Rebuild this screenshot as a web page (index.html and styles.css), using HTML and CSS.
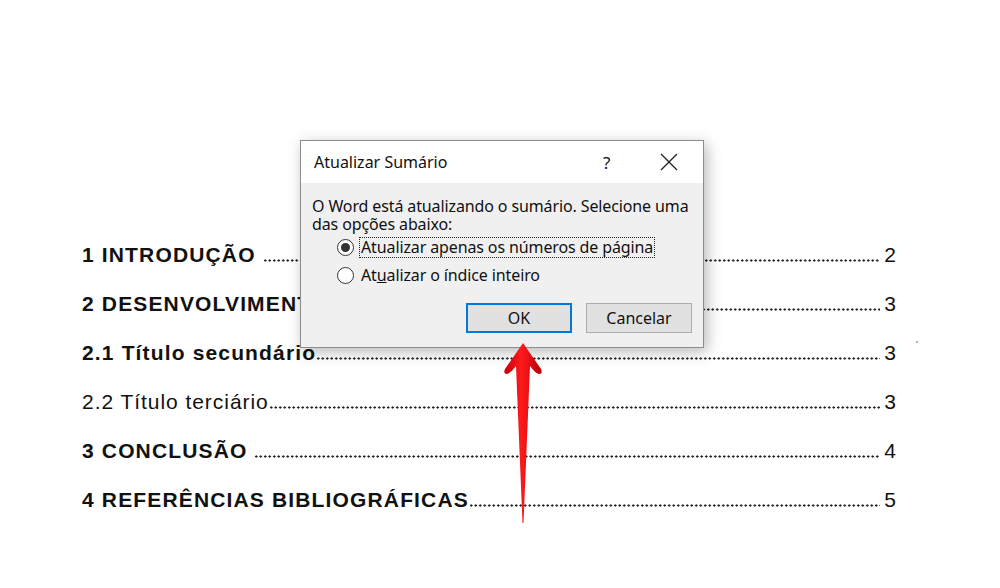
FILE: index.html
```html
<!DOCTYPE html>
<html lang="pt">
<head>
<meta charset="utf-8">
<title>Atualizar Sumário</title>
<link rel="stylesheet" href="styles.css">
</head>
<body>
<div class="page">
  <div class="toc">
    <div class="row bold"><span class="t">1 INTRODUÇÃO&nbsp;</span><span class="leader"></span><span class="n">2</span></div>
    <div class="row bold"><span class="t">2 DESENVOLVIMENTO</span><span class="leader"></span><span class="n">3</span></div>
    <div class="row bold"><span class="t">2.1 Título secundário</span><span class="leader"></span><span class="n">3</span></div>
    <div class="row"><span class="t">2.2 Título terciário</span><span class="leader"></span><span class="n">3</span></div>
    <div class="row bold"><span class="t">3 CONCLUSÃO&nbsp;</span><span class="leader"></span><span class="n">4</span></div>
    <div class="row bold"><span class="t">4 REFERÊNCIAS BIBLIOGRÁFICAS</span><span class="leader"></span><span class="n">5</span></div>
  </div>
  <span class="speck"></span>

  <div class="dialog">
    <div class="titlebar">
      <span class="title">Atualizar Sumário</span>
      <span class="help">?</span>
      <svg class="close" width="18" height="18" viewBox="0 0 18 18"><path d="M1 1 L17 17 M17 1 L1 17" stroke="#222" stroke-width="1.3" fill="none"/></svg>
    </div>
    <div class="body">
      <p class="msg">O Word está atualizando o sumário. Selecione uma das opções abaixo:</p>
      <div class="opt"><span class="radio checked"></span><span class="label focus">Atualizar apenas os números de página</span></div>
      <div class="opt"><span class="radio"></span><span class="label">At<u>u</u>alizar o índice inteiro</span></div>
      <div class="buttons">
        <button class="btn default">OK</button>
        <button class="btn">Cancelar</button>
      </div>
    </div>
  </div>

  <svg class="arrow" width="60" height="195" viewBox="0 0 60 195">
    <defs>
      <linearGradient id="ag" x1="0" y1="0" x2="1" y2="0">
        <stop offset="0" stop-color="#c8000a"/>
        <stop offset="0.45" stop-color="#ff1a1a"/>
        <stop offset="1" stop-color="#b80008"/>
      </linearGradient>
    </defs>
    <path d="M28 8 L46 34 Q48 39 44 39 Q40 38 35 31 L28.5 188 L27.5 188 L21 31 Q16 38 12 39 Q8 39 10 34 Z" fill="url(#ag)"/>
  </svg>
</div>
</body>
</html>
```
FILE: styles.css
```css
html, body {
  margin: 0;
  padding: 0;
  background: #fff;
}
.page {
  position: relative;
  width: 1000px;
  height: 588px;
  overflow: hidden;
}
.toc {
  padding-top: 230px;
  padding-left: 82px;
  width: 814px;
  font-family: "Liberation Sans", Arial, sans-serif;
  font-size: 21px;
  color: #111;
}
.row {
  display: flex;
  align-items: baseline;
  height: 49px;
  line-height: 49px;
}
.row .t { letter-spacing: 0.95px; }
.row.bold .t { font-weight: bold; letter-spacing: 1.15px; }
.t { white-space: nowrap; }
.leader {
  flex: 1;
  height: 3px;
  margin-right: 4px;
  background-image: radial-gradient(circle, #222 0.9px, transparent 1.4px);
  background-size: 4.5px 3px;
  background-repeat: repeat-x;
  background-position: 0 0;
}
.n { font-weight: normal; }
.speck {
  position: absolute;
  left: 916px;
  top: 341px;
  width: 2px;
  height: 2px;
  border-radius: 1px;
  background: #999;
}

.dialog {
  position: absolute;
  left: 300px;
  top: 140px;
  width: 404px;
  height: 208px;
  box-sizing: border-box;
  border: 1px solid #8c8c8c;
  background: #f0f0f0;
  box-shadow: 3px 4px 14px rgba(0,0,0,0.28);
  font-family: "Noto Sans", "Open Sans", sans-serif;
  color: #111;
  display: flex;
  flex-direction: column;
}
.titlebar {
  height: 42px;
  background: #fff;
  display: flex;
  align-items: center;
  padding-left: 13px;
  font-size: 16px;
}
.title { flex: 1; }
.help {
  width: 20px;
  font-size: 17px;
  margin-right: 37px;
}
.close { margin-right: 25px; }
.body {
  flex: 1;
  padding: 14px 11px 0 11px;
  font-size: 16px;
  letter-spacing: -0.12px;
}
.msg {
  margin: 0;
  line-height: 18px;
}
.opt {
  display: flex;
  align-items: center;
  height: 28px;
  padding-left: 25px;
}
.radio {
  width: 15px;
  height: 15px;
  border: 1px solid #333;
  border-radius: 50%;
  background: #fff;
  margin-right: 5px;
  display: flex;
  align-items: center;
  justify-content: center;
  flex: none;
}
.radio.checked::after {
  content: "";
  width: 9px;
  height: 9px;
  border-radius: 50%;
  background: #333;
}
.label {
  line-height: 19px;
  padding: 0 1px;
  border: 1px dotted transparent;
}
.label.focus { border-color: #222; }
.buttons {
  display: flex;
  justify-content: flex-end;
  gap: 14px;
  margin-top: 14px;
}
.btn {
  width: 106px;
  height: 30px;
  box-sizing: border-box;
  border: 1px solid #adadad;
  background: #e1e1e1;
  font-family: "Noto Sans", "Open Sans", sans-serif;
  font-size: 16px;
  color: #111;
  padding: 0;
}
.btn.default {
  border: 2px solid #0078d7;
}
.arrow {
  position: absolute;
  left: 495px;
  top: 335px;
}
```
